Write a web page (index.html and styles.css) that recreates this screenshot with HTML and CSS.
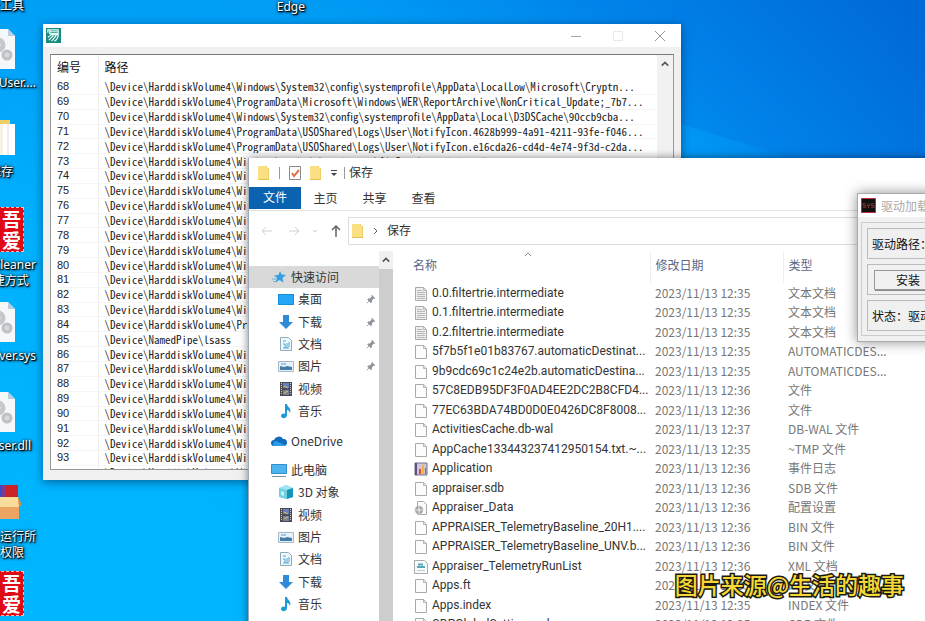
FILE: index.html
```
<!DOCTYPE html>
<html lang="zh-CN">
<head>
<meta charset="utf-8">
<title>桌面</title>
<link rel="stylesheet" href="styles.css">
</head>
<body>
<svg class="defs" aria-hidden="true">
  <symbol id="folder" viewBox="0 0 14 16"><path d="M1 1h9v2h2v12H1z" fill="#f0ce66"/><path d="M1 1h8v2h2v12H1z" fill="#fbdf83"/><path d="M1 14h11v1H1z" fill="#e5bd50"/></symbol>
  <symbol id="file" viewBox="0 0 14 16"><path d="M1.500 1.500h8l3 3v10h-11z" fill="#fcfcfc" stroke="#a9a9a9"/><path d="M9.500 1.500v3h3" fill="none" stroke="#b5b5b5"/></symbol>
  <symbol id="text" viewBox="0 0 14 16"><path d="M1.500 1.500h8l3 3v10h-11z" fill="#eee" stroke="#a9a9a9"/><path d="M9.500 1.500v3h3M3 4.500h5M3 6.500h8M3 8.500h8M3 10.500h8M3 12.500h8" fill="none" stroke="#b8b8b8"/></symbol>
  <symbol id="log" viewBox="0 0 14 16"><path d="M1 2h12v12H1z" fill="#cfc5dc" stroke="#77708a"/><path d="M2 2v12" stroke="#605080" stroke-width="2"/><path d="M5 13V8h2v5z" fill="#d84b3c"/><path d="M8 13V4h2v9z" fill="#edb531"/><path d="M11 13V7h1v6z" fill="#5575b0"/></symbol>
  <symbol id="config" viewBox="0 0 14 16"><path d="M3.500 1.500h6l3 3v10h-9z" fill="#fafafa" stroke="#a9a9a9"/><circle cx="5" cy="10" r="4" fill="#a5a5a5"/><circle cx="5" cy="10" r="1.500" fill="#eee"/><path d="M5 5v10M0 10h10" stroke="#ddd"/></symbol>
  <symbol id="xml" viewBox="0 0 14 16"><path d="M.5 1.500h10l3 3v10H.5z" fill="#f8fbfd" stroke="#a9a9a9"/><path d="M4 5.500h5M3 8h8" stroke="#58a5b5" stroke-width="2"/><path d="M3 11.500h8" stroke="#bcc"/></symbol>
  <symbol id="gears" viewBox="0 0 42 42"><path d="M4 1h30l7 7v33H4z" fill="#f5f7f9"/><path d="M34 1v7h7z" fill="#b8cfe0"/><circle cx="24" cy="17" r="5" fill="none" stroke="#c3c8cc" stroke-width="5"/><circle cx="33" cy="27" r="4" fill="#d6d9db" stroke="#bcc2c6" stroke-width="3"/></symbol>
  <symbol id="star" viewBox="0 0 16 16"><path d="M9 2l1.500 3.500 4.500 .5-3.500 3 1 4.500-4-2.500-4 2.500 1.500-4.500L3 6.500l4.500-.5z" fill="#379ee0"/><path d="M1 10h4M2 12.500h3" stroke="#67b8ec"/></symbol>
  <symbol id="desk" viewBox="0 0 16 16"><path d="M0 3h16v11H0z" fill="#168fe0"/><path d="M1 4h14v9H1z" fill="#26a6f5"/></symbol>
  <symbol id="down" viewBox="0 0 16 16"><path d="M5 1h6v7h4l-7 7-7-7h4z" fill="#2f8bd8"/></symbol>
  <symbol id="doc" viewBox="0 0 16 16"><path d="M2.500 1.500h8l3 3v10h-11z" fill="#edf7fc" stroke="#8eabbb"/><path d="M5 5h3M5 8h2v4M9 7v5M11 6v5M5 12h6" stroke="#58a6ce" fill="none"/></symbol>
  <symbol id="pic" viewBox="0 0 16 16"><path d="M.5 3.500h15v10H.5z" fill="#e7f2fa" stroke="#a7b6c3"/><path d="M2 8l4 1 3-1 5 1v3H2z" fill="#447da8"/><path d="M3 6h5" stroke="#9cc9e8" stroke-width="2"/></symbol>
  <symbol id="video" viewBox="0 0 16 16"><path d="M2 1h12v14H2z" fill="#4c4c50"/><path d="M5 2h6v5H5z" fill="#637fc6"/><path d="M5 9h6v5H5z" fill="#7782a0"/><path d="M6 5l4 2M6 12l4-2" stroke="#dfc056"/><path d="M3.500 2v12M12.500 2v12" stroke="#ccc" stroke-dasharray="1 1"/></symbol>
  <symbol id="music" viewBox="0 0 16 16"><path d="M7 1h2c0 3 5 4 3 9-.5-2-1.500-3-3-3v5c0 4-6 4-6 1 0-2 2-3 4-2z" fill="#1d9ad8"/></symbol>
  <symbol id="cloud" viewBox="0 0 16 16"><path d="M3 13a3 3 0 010-6 5 5 0 019-1 3.500 3.500 0 011 7z" fill="#0f6cbd"/><path d="M3 13a3 3 0 012-5l9 4c-1 1-2 1-3 1z" fill="#299be8"/></symbol>
  <symbol id="pc" viewBox="0 0 16 16"><path d="M.5 2.500h15v9H.5z" fill="#4eb4f0" stroke="#338fc8"/><path d="M1 14.500h14" stroke="#83929c"/></symbol>
  <symbol id="cube" viewBox="0 0 16 16"><path d="M1 4l7-3 7 3v9l-7 2-7-2z" fill="#6fd0e2"/><path d="M1 4l7-3 7 3-6 2z" fill="#a2e5f0"/><path d="M9 6l6-2v9l-6 2z" fill="#1694b8"/><path d="M3 7l3 1v4l-3-1z" fill="#c6f2f8"/></symbol>
  <symbol id="pin" viewBox="0 0 12 12"><path d="M7 1l4 4-1 1-1-.5L7 8v2L6 11 1.500 6.500 2.500 5.500h2L7 3l-.5-1z" fill="#8c9298"/><path d="M4 8l-3 3" stroke="#8c9298"/></symbol>
</svg>

<main class="desktop">
  <div class="shortcut s-tools"><span>全工具</span></div>
  <div class="shortcut s-edge"><span>Edge</span></div>
  <div class="shortcut s-user"><svg><use href="#gears"/></svg><span>User....</span></div>
  <div class="shortcut s-save"><svg viewBox="0 0 42 42"><path d="M4 3h32v30H4z" fill="#f0ce66"/><path d="M20 7h15v31H20z" fill="#f6f2e6"/><path d="M29 7h12v31H29z" fill="#fff"/><path d="M34 7v31" stroke="#ddd"/></svg><span>保存</span></div>
  <div class="shortcut s-cleaner"><i class="seal">吾<br>爱</i><span>CCleaner<br>捷方式</span></div>
  <div class="shortcut s-driver"><svg><use href="#gears"/></svg><span>driver.sys</span></div>
  <div class="shortcut s-dll"><svg><use href="#gears"/></svg><span>user.dll</span></div>
  <div class="shortcut s-run"><svg viewBox="0 0 42 42"><path d="M4 3h18v15H4z" fill="#3c45c9"/><path d="M26 3h12v15H26z" fill="#c92227"/><path d="M22 3h4v15h-4z" fill="#7b3a90"/><path d="M0 15h38l4 8-3 1v13H0z" fill="#eca463"/><path d="M0 15h38l1 10H0z" fill="#fbdb9c"/><path d="M38 15l4 8-3 1z" fill="#c98b3c"/></svg><span>后运行所<br>权限</span></div>
  <div class="shortcut s-seal"><i class="seal">吾<br>爱</i></div>

  <section class="window paths" aria-label="路径">
    <header class="titlebar">
      <svg class="app" viewBox="0 0 16 16"><path d="M0 0h16v16H0z" fill="#168b80"/><path d="M2 5V2h11v4H4V2m0 2h8M2 10l4-3h7c0 4-2 6-4 7M8 8l-5 5M11 8l-5 6" fill="none" stroke="#e8fff9" stroke-width="1.300"/></svg>
      <div class="controls">
        <button aria-label="最小化"><svg viewBox="0 0 10 10"><path d="M0 5.500h10" stroke="#aaa"/></svg></button>
        <button aria-label="最大化"><svg viewBox="0 0 10 10"><path d="M.5 .5h9v9h-9z" fill="none" stroke="#e9e9e9"/></svg></button>
        <button aria-label="关闭"><svg viewBox="0 0 10 10"><path d="M0 0l10 10M10 0L0 10" stroke="#999"/></svg></button>
      </div>
    </header>
    <div class="listbox">
      <div class="listview">
        <table>
          <thead><tr><th class="num">编号</th><th>路径</th></tr></thead>
          <tbody>
            <tr><td>68</td><td>\Device\HarddiskVolume4\Windows\System32\config\systemprofile\AppData\LocalLow\Microsoft\Cryptn...</td></tr>
            <tr><td>69</td><td>\Device\HarddiskVolume4\ProgramData\Microsoft\Windows\WER\ReportArchive\NonCritical_Update;_7b7...</td></tr>
            <tr><td>70</td><td>\Device\HarddiskVolume4\Windows\System32\config\systemprofile\AppData\Local\D3DSCache\90ccb9cba...</td></tr>
            <tr><td>71</td><td>\Device\HarddiskVolume4\ProgramData\USOShared\Logs\User\NotifyIcon.4628b999-4a91-4211-93fe-f046...</td></tr>
            <tr><td>72</td><td>\Device\HarddiskVolume4\ProgramData\USOShared\Logs\User\NotifyIcon.e16cda26-cd4d-4e74-9f3d-c2da...</td></tr>
            <tr><td>73</td><td>\Device\HarddiskVolume4\Windows\apphelp\registrar\AltData\servicing.db</td></tr>
            <tr><td>74</td><td>\Device\HarddiskVolume4\Windows</td></tr>
            <tr><td>75</td><td>\Device\HarddiskVolume4\Windows</td></tr>
            <tr><td>76</td><td>\Device\HarddiskVolume4\Windows</td></tr>
            <tr><td>77</td><td>\Device\HarddiskVolume4\Windows</td></tr>
            <tr><td>78</td><td>\Device\HarddiskVolume4\Windows</td></tr>
            <tr><td>79</td><td>\Device\HarddiskVolume4\Windows</td></tr>
            <tr><td>80</td><td>\Device\HarddiskVolume4\Windows</td></tr>
            <tr><td>81</td><td>\Device\HarddiskVolume4\Windows</td></tr>
            <tr><td>82</td><td>\Device\HarddiskVolume4\Windows</td></tr>
            <tr><td>83</td><td>\Device\HarddiskVolume4\Windows</td></tr>
            <tr><td>84</td><td>\Device\HarddiskVolume4\ProgramData</td></tr>
            <tr><td>85</td><td>\Device\NamedPipe\lsass</td></tr>
            <tr><td>86</td><td>\Device\HarddiskVolume4\Windows</td></tr>
            <tr><td>87</td><td>\Device\HarddiskVolume4\Windows</td></tr>
            <tr><td>88</td><td>\Device\HarddiskVolume4\Windows</td></tr>
            <tr><td>89</td><td>\Device\HarddiskVolume4\Windows</td></tr>
            <tr><td>90</td><td>\Device\HarddiskVolume4\Windows</td></tr>
            <tr><td>91</td><td>\Device\HarddiskVolume4\Windows</td></tr>
            <tr><td>92</td><td>\Device\HarddiskVolume4\Windows</td></tr>
            <tr><td>93</td><td>\Device\HarddiskVolume4\Windows</td></tr>
            <tr><td></td><td>\Device\HarddiskVolume4\Windows</td></tr>
          </tbody>
        </table>
      </div>
      <div class="scroll"><svg viewBox="0 0 10 10"><path d="M1 7l4-4 4 4" fill="none" stroke="#555" stroke-width="2"/></svg></div>
    </div>
  </section>

  <section class="window explorer" aria-label="保存">
    <header class="quick">
      <svg class="f"><use href="#folder"/></svg><i class="sep"></i>
      <svg class="f" viewBox="0 0 14 16"><path d="M1.500 1.500h11v13h-11z" fill="#fff" stroke="#8b8b8b"/><path d="M4 8l2 3 5-6" fill="none" stroke="#d9764c" stroke-width="2"/></svg>
      <svg class="f"><use href="#folder"/></svg>
      <svg class="caret" viewBox="0 0 8 8"><path d="M1 1.500h6" stroke="#444"/><path d="M1 4h6L4 7z" fill="#444"/></svg><i class="sep"></i>
      <span>保存</span>
    </header>
    <nav class="ribbon"><button class="on">文件</button><button>主页</button><button>共享</button><button>查看</button></nav>
    <div class="address">
      <div class="arrows">
        <svg viewBox="0 0 12 12"><path d="M11 6H1M5 2L1 6l4 4" fill="none" stroke="#d0d0d0"/></svg>
        <svg viewBox="0 0 12 12"><path d="M1 6h10M7 2l4 4-4 4" fill="none" stroke="#d0d0d0"/></svg>
        <svg class="tiny" viewBox="0 0 6 6"><path d="M1 2l2 2 2-2" fill="none" stroke="#ccc"/></svg>
        <svg viewBox="0 0 12 12"><path d="M6 12V1M2 5l4-4 4 4" fill="none" stroke="#666" stroke-width="1.500"/></svg>
      </div>
      <div class="crumb"><svg class="f"><use href="#folder"/></svg><svg class="chev" viewBox="0 0 6 8"><path d="M1 1l3 3-3 3" fill="none" stroke="#666"/></svg><span>保存</span></div>
    </div>
    <div class="content">
      <nav class="tree">
        <ul>
          <li class="top sel"><svg><use href="#star"/></svg>快速访问</li>
          <li><svg><use href="#desk"/></svg>桌面<svg class="pin"><use href="#pin"/></svg></li>
          <li><svg><use href="#down"/></svg>下载<svg class="pin"><use href="#pin"/></svg></li>
          <li><svg><use href="#doc"/></svg>文档<svg class="pin"><use href="#pin"/></svg></li>
          <li><svg><use href="#pic"/></svg>图片<svg class="pin"><use href="#pin"/></svg></li>
          <li><svg><use href="#video"/></svg>视频</li>
          <li><svg><use href="#music"/></svg>音乐</li>
        </ul>
        <ul class="one"><li class="top"><svg><use href="#cloud"/></svg>OneDrive</li></ul>
        <ul>
          <li class="top"><svg><use href="#pc"/></svg>此电脑</li>
          <li><svg><use href="#cube"/></svg>3D 对象</li>
          <li><svg><use href="#video"/></svg>视频</li>
          <li><svg><use href="#pic"/></svg>图片</li>
          <li><svg><use href="#doc"/></svg>文档</li>
          <li><svg><use href="#down"/></svg>下载</li>
          <li><svg><use href="#music"/></svg>音乐</li>
        </ul>
      </nav>
      <div class="treebar"><div class="scroll"><svg viewBox="0 0 10 10"><path d="M1 7l4-4 4 4" fill="none" stroke="#555" stroke-width="2"/></svg></div></div>
      <div class="files">
        <table>
          <thead><tr><th class="name">名称<svg class="sort" viewBox="0 0 8 5"><path d="M1 4l3-3 3 3" fill="none" stroke="#888"/></svg></th><th class="date">修改日期</th><th>类型</th></tr></thead>
          <tbody>
            <tr><td><svg class="f"><use href="#text"/></svg>0.0.filtertrie.intermediate</td><td>2023/11/13 12:35</td><td>文本文档</td></tr>
            <tr><td><svg class="f"><use href="#text"/></svg>0.1.filtertrie.intermediate</td><td>2023/11/13 12:35</td><td>文本文档</td></tr>
            <tr><td><svg class="f"><use href="#text"/></svg>0.2.filtertrie.intermediate</td><td>2023/11/13 12:35</td><td>文本文档</td></tr>
            <tr><td><svg class="f"><use href="#file"/></svg>5f7b5f1e01b83767.automaticDestinat...</td><td>2023/11/13 12:35</td><td>AUTOMATICDES...</td></tr>
            <tr><td><svg class="f"><use href="#file"/></svg>9b9cdc69c1c24e2b.automaticDestina...</td><td>2023/11/13 12:35</td><td>AUTOMATICDES...</td></tr>
            <tr><td><svg class="f"><use href="#file"/></svg>57C8EDB95DF3F0AD4EE2DC2B8CFD4...</td><td>2023/11/13 12:36</td><td>文件</td></tr>
            <tr><td><svg class="f"><use href="#file"/></svg>77EC63BDA74BD0D0E0426DC8F8008...</td><td>2023/11/13 12:36</td><td>文件</td></tr>
            <tr><td><svg class="f"><use href="#file"/></svg>ActivitiesCache.db-wal</td><td>2023/11/13 12:37</td><td>DB-WAL 文件</td></tr>
            <tr><td><svg class="f"><use href="#file"/></svg>AppCache133443237412950154.txt.~...</td><td>2023/11/13 12:35</td><td>~TMP 文件</td></tr>
            <tr><td><svg class="f"><use href="#log"/></svg>Application</td><td>2023/11/13 12:36</td><td>事件日志</td></tr>
            <tr><td><svg class="f"><use href="#file"/></svg>appraiser.sdb</td><td>2023/11/13 12:36</td><td>SDB 文件</td></tr>
            <tr><td><svg class="f"><use href="#config"/></svg>Appraiser_Data</td><td>2023/11/13 12:36</td><td>配置设置</td></tr>
            <tr><td><svg class="f"><use href="#file"/></svg>APPRAISER_TelemetryBaseline_20H1....</td><td>2023/11/13 12:36</td><td>BIN 文件</td></tr>
            <tr><td><svg class="f"><use href="#file"/></svg>APPRAISER_TelemetryBaseline_UNV.b...</td><td>2023/11/13 12:36</td><td>BIN 文件</td></tr>
            <tr><td><svg class="f"><use href="#xml"/></svg>Appraiser_TelemetryRunList</td><td>2023/11/13 12:36</td><td>XML 文档</td></tr>
            <tr><td><svg class="f"><use href="#file"/></svg>Apps.ft</td><td>2023/11/13 12:35</td><td>FT 文件</td></tr>
            <tr><td><svg class="f"><use href="#file"/></svg>Apps.index</td><td>2023/11/13 12:35</td><td>INDEX 文件</td></tr>
            <tr><td><svg class="f"><use href="#file"/></svg>CDPGlobalSettings.cdp</td><td>2023/11/13 12:35</td><td>CDP 文件</td></tr>
          </tbody>
        </table>
      </div>
    </div>
  </section>

  <section class="window loader" aria-label="驱动加载">
    <header><svg viewBox="0 0 16 16"><path d="M.5 .5h15v15H.5z" fill="#111" stroke="#d02030"/><path d="M5 6H2v2h3v2H2M7 6v2h2V6M8 8v3M14 6h-3v2h3v2h-3" fill="none" stroke="#833"/></svg>驱动加载工具</header>
    <div class="panel">
      <div class="box">驱动路径：</div>
      <div class="box"><button>安装</button></div>
      <div class="box">状态：驱动</div>
    </div>
  </section>

  <div class="watermark">图片来源@生活的趣事</div>
</main>
</body>
</html>
```
FILE: styles.css
```
* { box-sizing: border-box; }
body { margin: 0; font: 12px/16px "Noto Sans", "Noto Sans CJK SC", sans-serif; color: #333; }
.defs { position: absolute; width: 0; height: 0; }
svg { display: block; flex: none; }
button { border: 0; padding: 0; background: none; font: inherit; color: inherit; }
ul { list-style: none; margin: 0; padding: 0; }
table { border-collapse: collapse; table-layout: fixed; width: 100%; }
th, td { padding: 0; text-align: left; font-weight: 400; white-space: nowrap; overflow: hidden; }
.desktop {
  position: relative; height: 100vh; overflow: hidden;
  background: radial-gradient(ellipse 1100px 1000px at 10% 100%, #00b6ff 0%, #00b1fe 38%, #009df5 64%, #0083ea 77%, #0069d8 96%);
}
/* light beam of the wallpaper */
.desktop::before {
  content: ""; position: absolute; left: 680px; top: 124px; width: 112px; height: 34px;
  background: linear-gradient(90deg, rgba(0, 170, 255, .4), rgba(0, 170, 255, .1)); clip-path: polygon(0 0, 100% 100%, 0 100%);
}

.shortcut {
  position: absolute; left: -44px; width: 80px; display: flex; flex-direction: column; align-items: flex-end;
  gap: 5px; color: #fff; text-align: center; line-height: 16px; text-shadow: 1px 1px 1px #000, 0 0 3px #000, 1px 1px 3px #000;
}
.shortcut > svg { width: 42px; height: 42px; margin-right: 20px; }
.s-tools { top: -2px; left: -56px; }
.s-edge { top: -1px; left: 225px; }
.s-user { top: 28px; }
.s-save { top: 117px; }
.s-save span { margin-right: 23px; }
.s-cleaner { top: 207px; }
.s-driver { top: 301px; }
.s-dll { top: 391px; }
.s-dll span { margin-right: 5px; }
.s-run { top: 482px; }
.s-run > svg { margin-right: 14px; }
.s-seal { top: 571px; }
.seal {
  width: 48px; height: 45px; margin-right: 12px; padding-right: 2px; border: 1px dashed #fbb; background: #df0a16; text-align: right;
  font: 700 19px/21px "Noto Sans CJK SC", sans-serif; text-shadow: none;
}

.window { position: absolute; overflow: hidden; }

.paths { left: 43px; top: 24px; width: 638px; height: 456px; background: #f0f0f0; box-shadow: 0 2px 9px rgba(0, 20, 60, .5); display: flex; flex-direction: column; }
.titlebar { display: flex; justify-content: space-between; align-items: center; height: 23px; padding: 0 16px 0 3px; background: #fff; }
.titlebar .app { width: 15px; height: 15px; }
.controls { display: flex; gap: 32px; }
.controls svg { width: 10px; height: 10px; }
.listbox { flex: 1; display: flex; min-height: 0; margin: 7px 7px 10px; border: 1px solid #999; border-top-color: #777; background: #fff; }
.listview { flex: 1; overflow: hidden; padding-left: 6px; }
.listview table { height: 426px; }
.listview th { height: 25px; padding-bottom: 1px; font: 12px/18px "Noto Sans CJK SC", sans-serif; color: #111; }
.listview .num { width: 41px; }
.listview tr > :first-child { border-right: 1px solid #eee; }
.listview td { line-height: 13px; border-bottom: 1px solid #f5f5f5; color: #222; font-family: "Liberation Sans", sans-serif; font-size: 11px; }
.listview td + td { font-family: "Noto Sans CJK SC", monospace; font-feature-settings: "hwid"; }
.listview tr > :last-child { padding-left: 6px; }
.scroll { width: 16px; height: 18px; display: grid; place-items: center; }
.listbox .scroll { height: auto; padding-top: 5px; place-items: start center; background: #f1f1f1; }
.scroll svg { width: 8px; height: 8px; }

.explorer { left: 248px; top: 158px; right: -60px; bottom: -20px; background: #fff; box-shadow: 0 0 8px rgba(0, 0, 0, .5); border-left: 1px solid #9ab; display: flex; flex-direction: column; font-size: 12px; }
.f { width: 14px; height: 16px; }
.quick { display: flex; align-items: center; height: 29px; padding-left: 8px; gap: 7px; }
.quick span { margin-left: -4px; }
.caret { width: 8px; height: 8px; }
.sep { width: 1px; height: 12px; margin: 0 1px; background: #999; }
.caret + .sep { margin-left: -1px; }
.ribbon { display: flex; height: 24px; border-bottom: 1px solid #e2e2e2; }
.ribbon button { width: 49px; }
.ribbon .on { width: 52px; height: 22px; background: #0a62b1; color: #fff; }
.address { display: flex; align-items: center; height: 40px; }
.arrows { display: flex; align-items: center; gap: 15px; padding: 0 6px 0 12px; }
.arrows svg { width: 12px; height: 12px; }
.arrows .tiny { width: 6px; margin: 0 -3px; }
.crumb { flex: 1; height: 28px; border: 1px solid #ddd; display: flex; align-items: center; gap: 8px; padding-left: 2px; }
.chev { width: 6px; height: 8px; }
.content { flex: 1; display: flex; min-height: 0; }
.tree { width: 130px; padding-top: 15px; display: flex; flex-direction: column; gap: 7px; font-family: "Noto Sans CJK SC", sans-serif; }
.tree ul { flex: none; display: flex; flex-direction: column; height: 156px; }
.tree .one { height: 23px; }
.tree li { flex: 1; display: flex; align-items: center; gap: 4px; padding-left: 29px; }
.tree li.top { padding-left: 22px; }
.tree .sel { background: #d9d9d9; }
.tree svg { width: 16px; height: 16px; }
.tree .pin { width: 10px; height: 10px; margin: 0 3px 0 auto; }
.treebar { width: 14px; background: #cdcdcd; }
.treebar .scroll { width: 14px; background: #f0f0f0; }
.files { flex: 1; padding-left: 20px; overflow: hidden; font-family: "Noto Sans CJK SC", sans-serif; }
.files table { height: 383px; }
.files th { height: 32px; padding-bottom: 4px; color: #5a6785; position: relative; border-right: 1px solid #eee; }
.files .name { width: 237px; }
.files .date { width: 133px; }
.files th + th, .files td + td { padding-left: 5px; }
.files td { line-height: 18px; color: #333; font-family: Roboto, "Noto Sans CJK SC", sans-serif; }
.files td + td { color: #777; font-family: "Noto Sans CJK SC", sans-serif; }
.files td .f { display: inline-block; vertical-align: middle; margin: 0 4px 0 1px; }
.sort { position: absolute; left: 111px; top: 1px; width: 8px; height: 5px; }

.loader { left: 857px; top: 193px; width: 180px; height: 149px; background: #f0f0f0; border: 1px solid #aaa; box-shadow: 0 0 12px rgba(0, 0, 0, .45); font-family: "Noto Sans CJK SC", sans-serif; color: #111; }
.loader header { display: flex; align-items: center; gap: 5px; height: 23px; padding-left: 3px; background: #fff; color: #aaa; }
.loader header svg { width: 15px; height: 15px; }
.panel { display: flex; flex-direction: column; gap: 5px; margin: 5px 3px; padding: 5px 5px 4px; border: 1px solid #ccc; }
.box { height: 31px; padding: 0 4px; border: 1px solid #bbb; display: flex; align-items: center; }
.box button { width: 68px; height: 20px; margin-left: 2px; border: 1px solid #999; box-shadow: 1px 1px 0 #888; }

.watermark {
  position: absolute; right: 21px; bottom: 21px; font: 500 23px/32px "Noto Sans CJK SC", sans-serif; color: #f5d837;
  -webkit-text-stroke: 3px #1a1a10; paint-order: stroke fill;
}
```
